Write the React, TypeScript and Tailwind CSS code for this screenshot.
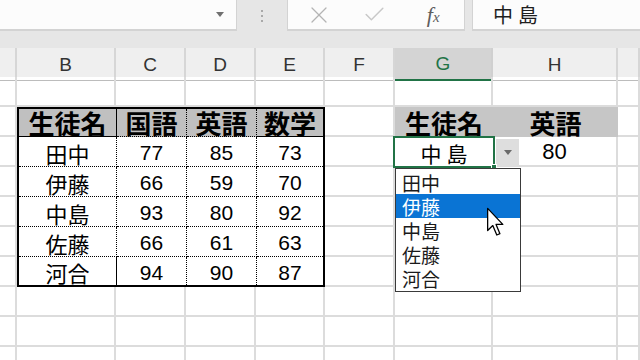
import { Check, X } from 'lucide-react';

const GRID_COLS = 'grid-cols-[17px_99px_70px_70px_69px_70px_98px_125px_1fr]';
const JP = "font-['Noto_Sans_CJK_JP',sans-serif]";
const NUM = "font-['Liberation_Sans','Noto_Sans_CJK_JP',sans-serif]";

const letters = ['', 'B', 'C', 'D', 'E', 'F', 'G', 'H', ''];

const students = [
  { name: '田中', kokugo: 77, eigo: 85, sugaku: 73 },
  { name: '伊藤', kokugo: 66, eigo: 59, sugaku: 70 },
  { name: '中島', kokugo: 93, eigo: 80, sugaku: 92 },
  { name: '佐藤', kokugo: 66, eigo: 61, sugaku: 63 },
  { name: '河合', kokugo: 94, eigo: 90, sugaku: 87 },
];

const options = ['田中', '伊藤', '中島', '佐藤', '河合'];

function FormulaBar() {
  return (
    <div className="flex h-[48px] items-start bg-[#e6e6e6]">
      <div className="flex h-[31px] w-[237px] items-center justify-end border-r border-b-2 border-[#d3d3d3] bg-[#fcfcfc] pr-[12px]">
        <span className="h-0 w-0 border-x-[4px] border-t-[5px] border-x-transparent border-t-[#707070]" />
      </div>
      <div className="flex h-[31px] w-[50px] flex-col items-center justify-center gap-[3px]">
        <span className="size-[2px] bg-[#a9a9a9]" />
        <span className="size-[2px] bg-[#a9a9a9]" />
        <span className="size-[2px] bg-[#a9a9a9]" />
      </div>
      <div className="flex h-[31px] w-[178px] items-center border-x border-b-2 border-[#d3d3d3] bg-[#fcfcfc] pl-[3px]">
        <div className="flex w-[57px] justify-center text-[#b4b4b4]">
          <X size={28} strokeWidth={1.1} />
        </div>
        <div className="flex w-[57px] justify-center text-[#c8c8c8]">
          <Check size={25} strokeWidth={1.4} />
        </div>
        <div className="flex w-[63px] justify-center font-['Liberation_Serif',serif] text-[22px] leading-none text-[#5e5e5e] italic">
          f<span className="mt-[6px] text-[15px]">x</span>
        </div>
      </div>
      <div
        className={`ml-[7px] flex h-[31px] flex-1 items-center border-b-2 border-l border-[#d3d3d3] bg-[#fcfcfc] pl-[20px] text-[20px] tracking-[5px] text-[#1e1e1e] ${JP}`}>
        中島
      </div>
    </div>
  );
}

function ColumnHeaders() {
  return (
    <div className={`grid h-[29px] ${GRID_COLS} bg-[#efefef]`}>
      {letters.map((l, i) => (
        <div
          key={i}
          className={`flex items-center justify-center border-r-2 border-b pt-[2px] ${NUM} text-[19px] ${
            l === 'G'
              ? 'border-r-[#d0d0d0] border-b-2 border-b-[#217346] bg-[#d4d4d4] text-[#217346]'
              : 'border-r-[#d6d6d6] border-b-[#bcbcbc] text-[#333333]'
          }`}>
          {l}
        </div>
      ))}
    </div>
  );
}

function ScoreTable() {
  const head = ['生徒名', '国語', '英語', '数学'];
  return (
    <div className="col-span-4 col-start-2 row-span-6 row-start-2 grid grid-cols-[98px_70px_70px_1fr] grid-rows-[28px_30px_30px_30px_30px_1fr] border-2 border-black bg-white">
      {head.map((h, i) => (
        <div
          key={h}
          className={`flex items-center justify-center border-b border-black bg-[#c0c0c0] text-[26px] leading-none font-bold ${JP} ${
            i === 0 ? 'border-r' : i < 3 ? 'border-r border-dotted' : ''
          }`}>
          {h}
        </div>
      ))}
      {students.map((s, r) => {
        const last = r === students.length - 1;
        const rowLine = last ? '' : 'border-b border-dotted border-b-black';
        return [s.name, s.kokugo, s.eigo, s.sugaku].map((v, i) => (
          <div
            key={`${r}-${i}`}
            className={`flex items-center justify-center pt-[2px] leading-none text-black ${rowLine} ${
              i === 0
                ? `border-r border-r-black text-[22px] ${JP}`
                : `text-[21px] ${NUM} ${i < 3 ? 'border-r border-dotted border-r-black' : ''}`
            }`}>
            {v}
          </div>
        ));
      })}
    </div>
  );
}

function Sheet() {
  const cells = [];
  for (let r = 1; r <= 10; r++) {
    for (let c = 0; c < 9; c++) {
      if (r >= 2 && r <= 7 && c >= 1 && c <= 4) continue;
      const key = `${r}-${c}`;
      if (r === 2 && (c === 6 || c === 7)) {
        cells.push(
          <div
            key={key}
            className={`flex items-center justify-center bg-[#c6c6c6] pt-[2px] text-[26px] leading-none font-bold text-black ${JP}`}>
            {c === 6 ? '生徒名' : '英語'}
          </div>,
        );
      } else if (r === 3 && c === 6) {
        cells.push(
          <div
            key={key}
            className={`relative z-10 -mx-[2px] -my-px flex items-center justify-center border-2 border-[#217346] bg-white pt-[2px] text-[21px] leading-none tracking-[5px] text-black ${JP}`}>
            <span className="pl-[5px]">中島</span>
            <span className="absolute -right-[4px] -bottom-[4px] size-[6px] border border-white bg-[#217346]" />
          </div>,
        );
      } else if (r === 3 && c === 7) {
        cells.push(
          <div
            key={key}
            className={`relative flex items-center justify-center border-r-2 border-b-2 border-[#dcdcdc] pt-[2px] text-[22px] leading-none text-black ${NUM}`}>
            <div className="absolute top-[2px] left-[3px] flex h-[27px] w-[23px] items-center justify-center bg-[#dedede]">
              <span className="h-0 w-0 border-x-[4px] border-t-[5px] border-x-transparent border-t-[#6b6b6b]" />
            </div>
            80
          </div>,
        );
      } else {
        cells.push(<div key={key} className="border-r-2 border-b-2 border-[#dcdcdc]" />);
      }
    }
  }

  return (
    <div className={`relative grid ${GRID_COLS} auto-rows-[30px]`}>
      <ScoreTable />
      {cells}
      <div className="absolute top-[91px] left-[395px] z-20 w-[126px] border border-[#3a3a3a] bg-white py-px">
        {options.map((o, i) => (
          <div
            key={o}
            className={`flex h-6 items-center pt-[1px] pl-[6px] text-[19px] leading-none ${JP} ${
              i === 1 ? 'bg-[#0a74d4] text-white' : 'text-[#1a1a1a]'
            }`}>
            {o}
          </div>
        ))}
      </div>
      <svg
        className="absolute top-[130px] left-[486px] z-30"
        width="19"
        height="30"
        viewBox="0 0 13 21">
        <path
          d="M1 1 L1 16.5 L4.6 13 L7.4 19.6 L9.6 18.7 L6.9 12.2 L11.6 12.2 Z"
          fill="white"
          stroke="black"
          strokeWidth="0.9"
          strokeLinejoin="round"
        />
      </svg>
    </div>
  );
}

export default function App() {
  return (
    <div className="h-[360px] w-[640px] overflow-hidden bg-white">
      <FormulaBar />
      <ColumnHeaders />
      <Sheet />
    </div>
  );
}
